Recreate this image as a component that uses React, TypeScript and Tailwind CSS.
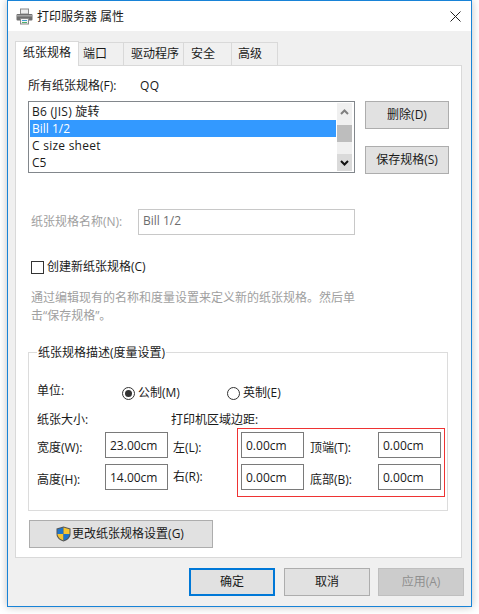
const font = "font-['Open_Sans','Noto_Sans_CJK_SC',sans-serif]";

function PrinterIcon() {
  return (
    <svg width="17" height="17" viewBox="0 0 17 17">
      <rect x="4.5" y="1" width="8" height="5" fill="#ededed" stroke="#8a8a8a" />
      <rect x="0.5" y="6" width="16" height="6.5" rx="1" fill="#6f6f6f" />
      <rect x="1" y="7" width="15" height="1.5" fill="#a3a3a3" />
      <rect x="4.5" y="10.5" width="8" height="5.5" fill="#f4f4f4" stroke="#8a8a8a" />
      <rect x="6" y="12" width="5" height="1" fill="#3f9fd6" />
      <rect x="6" y="14" width="5" height="1" fill="#4fb06a" />
    </svg>
  );
}

function ShieldIcon() {
  return (
    <svg width="15" height="16" viewBox="0 0 15 16">
      <path d="M7.5 0.5 L14.5 2.5 V8 C14.5 12 11 14.5 7.5 15.5 C4 14.5 0.5 12 0.5 8 V2.5 Z" fill="#555" />
      <path d="M7.5 1.5 V8 H1.5 V3.2 Z" fill="#1f74c9" />
      <path d="M7.5 1.5 L13.5 3.2 V8 H7.5 Z" fill="#f5c431" />
      <path d="M1.5 8 H7.5 V14.4 C4.6 13.5 1.7 11.5 1.5 8 Z" fill="#f5c431" />
      <path d="M7.5 8 H13.5 C13.3 11.5 10.4 13.5 7.5 14.4 Z" fill="#1f74c9" />
    </svg>
  );
}

function Tab({ label, width, pad }: { label: string; width: string; pad: string }) {
  return (
    <div className={`${width} ${pad} h-[23px] border border-b-0 border-l-0 border-[#d9d9d9] leading-[21px]`}>
      {label}
    </div>
  );
}

function Field({ value }: { value: string }) {
  return (
    <div className="w-[63px] h-[26px] border border-[#7a7a7a] bg-white pl-[4px] leading-[25px] text-[#1a1a1a]">
      {value}
    </div>
  );
}

function Radio({ checked }: { checked?: boolean }) {
  return (
    <span className="w-[13px] h-[13px] rounded-full border border-[#333] flex items-center justify-center">
      {checked && <span className="w-[7px] h-[7px] rounded-full bg-[#333]" />}
    </span>
  );
}

export default function App() {
  return (
    <div className={`${font} w-[479px] h-[614px] bg-white text-[12px] text-[#1a1a1a] overflow-hidden`}>
      <div className="ml-[7px] w-[465px] h-[607px] border border-[#1883d7] bg-[#f0f0f0] shadow-[0_0_8px_rgba(0,0,0,0.25)]">
        {/* Title bar */}
        <div className="h-[30px] bg-white flex items-center pl-[8px] pr-[10px]">
          <PrinterIcon />
          <span className="ml-[4px] mt-[2px] text-[#1a1a1a]">打印服务器 属性</span>
          <svg className="ml-auto" width="11" height="11" viewBox="0 0 11 11">
            <path d="M0.5 0.5 L10.5 10.5 M10.5 0.5 L0.5 10.5" stroke="#222" fill="none" />
          </svg>
        </div>

        {/* Tabs */}
        <div className="pl-[7px] pt-[9px] h-[34px] flex items-end relative z-10">
          <div className="w-[64px] h-[25px] -mb-px border border-b-0 border-[#d9d9d9] bg-white pl-[7px] leading-[21px]">
            纸张规格
          </div>
          <Tab label="端口" width="w-[45px]" pad="pl-[4px]" />
          <Tab label="驱动程序" width="w-[60px]" pad="pl-[7px]" />
          <Tab label="安全" width="w-[48px]" pad="pl-[7px]" />
          <Tab label="高级" width="w-[46px]" pad="pl-[6px]" />
        </div>

        {/* Panel */}
        <div className="ml-[7px] w-[447px] h-[493px] border border-[#d9d9d9] bg-white pl-[12px]">
          <div className="mt-[12px] h-[16px] flex items-center">
            <span className="w-[112px]">所有纸张规格(F):</span>
            <span className="tracking-[0.5px]">QQ</span>
          </div>

          <div className="mt-[7px] flex items-start">
            <div className="w-[327px] h-[72px] border border-[#82878c] p-px flex">
              <div className="w-[306px] leading-[17px]">
                <div className="h-[17px] pl-[2px] tracking-[0.25px]">B6 (JIS) 旋转</div>
                <div className="h-[17px] pl-[2px] bg-[#3399ff] text-white">Bill 1/2</div>
                <div className="h-[17px] pl-[2px] tracking-[0.25px]">C size sheet</div>
                <div className="h-[17px] pl-[2px]">C5</div>
              </div>
              <div className="ml-px w-[15px] h-[68px] bg-[#f0f0f0] flex flex-col">
                <div className="h-[17px] flex items-center justify-center">
                  <svg width="9" height="6" viewBox="0 0 9 6">
                    <path d="M1 5 L4.5 1.5 L8 5" stroke="#808080" strokeWidth="2" fill="none" />
                  </svg>
                </div>
                <div className="mt-[5px] h-[17px] bg-[#bdbdbd]" />
                <div className="mt-auto h-[17px] bg-[#dadada] flex items-center justify-center">
                  <svg width="9" height="6" viewBox="0 0 9 6">
                    <path d="M1 1 L4.5 4.5 L8 1" stroke="#111" strokeWidth="2" fill="none" />
                  </svg>
                </div>
              </div>
            </div>
            <div className="ml-[10px] flex flex-col gap-[17px]">
              <button className="w-[84px] h-[28px] bg-[#e1e1e1] border border-[#adadad]">删除(D)</button>
              <button className="w-[84px] h-[28px] bg-[#e1e1e1] border border-[#adadad]">保存规格(S)</button>
            </div>
          </div>

          <div className="mt-[35px] flex items-center text-[#a0a0a0]">
            <span className="ml-[3px] w-[107px]">纸张规格名称(N):</span>
            <div className="w-[217px] h-[26px] border border-[#c8c8c8] pl-[4px] leading-[22px] text-[#6d6d6d]">Bill 1/2</div>
          </div>

          <div className="mt-[24px] ml-[3px] h-[16px] flex items-center">
            <span className="w-[13px] h-[13px] border border-[#333]" />
            <span className="ml-[3px]">创建新纸张规格(C)</span>
          </div>

          <p className="mt-[14px] ml-[3px] w-[340px] leading-[17.5px] text-[#a0a0a0]">
            通过编辑现有的名称和度量设置来定义新的纸张规格。然后单击“保存规格”。
          </p>

          {/* Measurement group */}
          <fieldset className="relative mt-[20px] w-[420px] h-[167px] border border-[#dcdcdc] pl-[8px]">
            <legend className="px-px leading-[16px]">
              <span className="relative top-px">纸张规格描述(度量设置)</span>
            </legend>
            <div className="mt-[23px] h-[16px] flex items-center">
              <span className="w-[85px]">单位:</span>
              <div className="mt-[4px] w-[105px] flex items-center gap-[3px]">
                <Radio checked />
                <span>公制(M)</span>
              </div>
              <div className="mt-[4px] flex items-center gap-[3px]">
                <Radio />
                <span>英制(E)</span>
              </div>
            </div>
            <div className="mt-[13px] h-[16px] flex items-center">
              <span className="w-[134px]">纸张大小:</span>
              <span>打印机区域边距:</span>
            </div>
            <div className="mt-[4px] flex items-center">
              <span className="w-[68px] mt-[5px]">宽度(W):</span>
              <Field value="23.00cm" />
              <span className="ml-[5px] w-[68px] mt-[5px]">左(L):</span>
              <Field value="0.00cm" />
              <span className="ml-[6px] w-[68px] mt-[5px]">顶端(T):</span>
              <Field value="0.00cm" />
            </div>
            <div className="mt-[6px] flex items-center">
              <span className="w-[68px] mt-[5px]">高度(H):</span>
              <Field value="14.00cm" />
              <span className="ml-[5px] w-[68px]">右(R):</span>
              <Field value="0.00cm" />
              <span className="ml-[6px] w-[68px] mt-[5px]">底部(B):</span>
              <Field value="0.00cm" />
            </div>
            {/* red annotation box */}
            <div className="absolute left-[208px] top-[68px] w-[208px] h-[69px] border border-[#ee3333]" />
          </fieldset>

          <button className="mt-[9px] ml-px pr-[2px] w-[184px] h-[28px] bg-[#e1e1e1] border border-[#adadad] flex items-center justify-center gap-[1px]">
            <ShieldIcon />
            <span>更改纸张规格设置(G)</span>
          </button>
        </div>

        {/* Footer buttons */}
        <div className="mt-[10px] pl-[181px] flex">
          <button className="w-[86px] h-[28px] bg-[#e1e1e1] border-2 border-[#0078d7]">确定</button>
          <button className="ml-[9px] w-[86px] h-[28px] bg-[#e1e1e1] border border-[#adadad]">取消</button>
          <button className="ml-[8px] w-[86px] h-[28px] bg-[#cccccc] border border-[#bfbfbf] text-[#8f8f8f]">应用(A)</button>
        </div>
      </div>
    </div>
  );
}
